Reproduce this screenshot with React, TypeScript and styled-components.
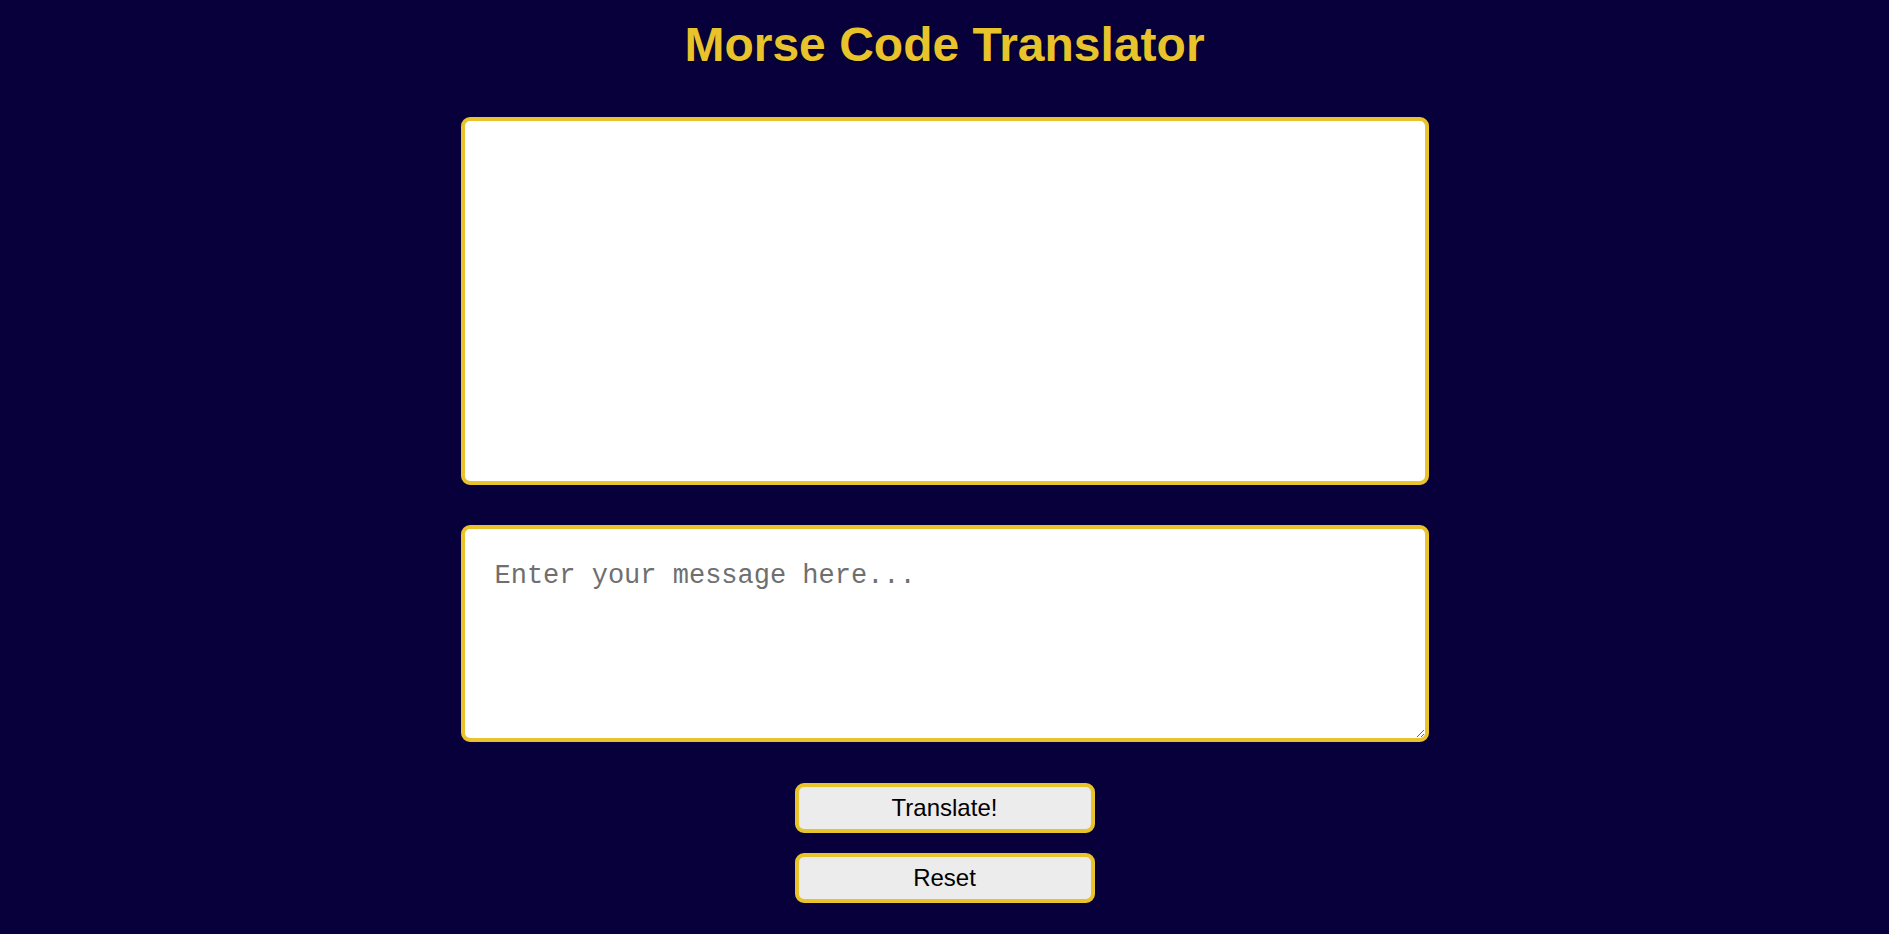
import React, { useState } from "react";
import styled, { createGlobalStyle } from "styled-components";

const Global = createGlobalStyle`
  html, body { margin: 0; padding: 0; background: #08003b; }
  body { font-family: "Liberation Sans", Arial, sans-serif; }
`;

const Page = styled.main`
  min-height: 934px;
  box-sizing: border-box;
  background: #08003b;
  display: flex;
  flex-direction: column;
  align-items: center;
  padding-top: 17px;
`;

const Title = styled.h1`
  margin: 0 0 45px;
  font-family: "Liberation Sans", Arial, sans-serif;
  font-weight: 700;
  font-size: 48px;
  line-height: 1.15;
  color: #e8c32b;
  text-shadow: 1px 1px 2px rgba(0, 0, 0, 0.6);
`;

const Output = styled.div`
  box-sizing: border-box;
  width: 968px;
  height: 368px;
  background: #ffffff;
  border: 4px solid #e8c32b;
  border-radius: 9px;
  padding: 28px;
  font-family: "Liberation Mono", "Courier New", monospace;
  font-size: 27px;
  color: #222;
  margin-bottom: 40px;
`;

const Input = styled.textarea`
  box-sizing: border-box;
  width: 968px;
  height: 217px;
  background: #ffffff;
  border: 4px solid #e8c32b;
  border-radius: 9px;
  padding: 32px 30px;
  font-family: "Liberation Mono", "Courier New", monospace;
  font-size: 27px;
  color: #222;
  outline: none;
  margin: 0 0 41px;
  display: block;
  &::placeholder { color: #6f6f6f; }
`;

const Buttons = styled.div`
  display: flex;
  flex-direction: column;
  gap: 20px;
`;

const Button = styled.button`
  box-sizing: border-box;
  width: 300px;
  height: 50px;
  background: #ececec;
  border: 4px solid #e8c32b;
  border-radius: 9px;
  font-family: "Liberation Sans", Arial, sans-serif;
  font-size: 24px;
  color: #000;
  cursor: pointer;
  padding: 0;
`;

export default function App() {
  const [text, setText] = useState("");
  return (
    <>
      <Global />
      <Page>
        <Title>Morse Code Translator</Title>
        <Output />
        <Input
          placeholder="Enter your message here..."
          value={text}
          onChange={(e) => setText(e.target.value)}
        />
        <Buttons>
          <Button>Translate!</Button>
          <Button onClick={() => setText("")}>Reset</Button>
        </Buttons>
      </Page>
    </>
  );
}
